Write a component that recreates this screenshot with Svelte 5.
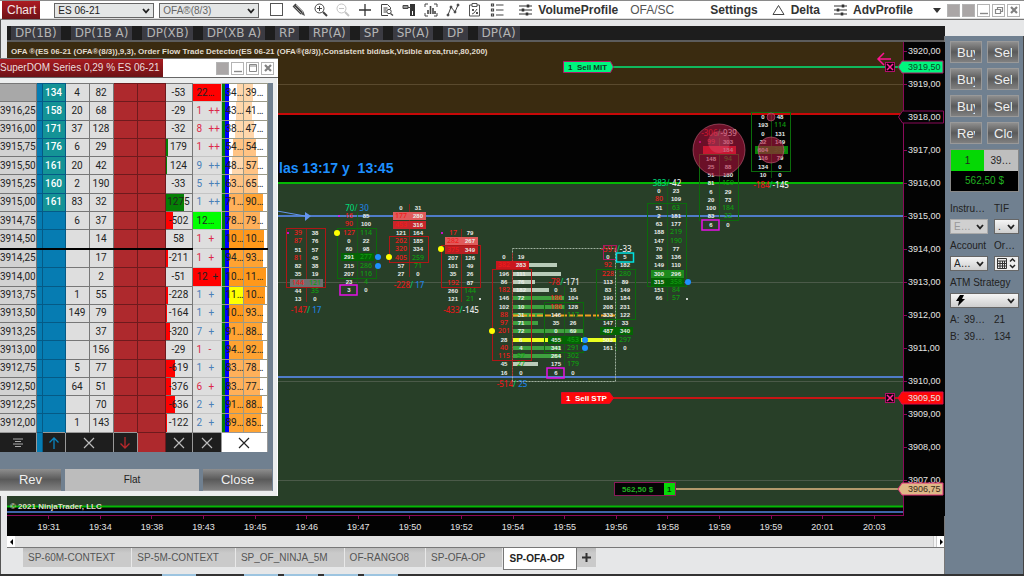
<script lang="ts">
  const profileTabs = ['DP(1B)', 'DP(1B A)', 'DP(XB)', 'DP(XB A)', 'RP', 'RP(A)', 'SP', 'SP(A)', 'DP', 'DP(A)'];
  const sheets = ['SP-60M-CONTEXT', 'SP-5M-CONTEXT', 'SP_OF_NINJA_5M', 'OF-RANGO8', 'SP-OFA-OP'];
  const times = ['19:31', '19:34', '19:38', '19:43', '19:45', '19:46', '19:47', '19:50', '19:52', '19:54', '19:55', '19:56', '19:58', '19:59', '19:59', '20:01', '20:03'];
  const prices = [3920, 3919, 3918, 3917, 3916, 3915, 3914, 3913, 3912, 3911, 3910, 3909, 3908, 3907];
  const orderButtons = ['Buy', 'Sell', 'Buy', 'Sell', 'Buy', 'Sell', 'Rev', 'Close'];

  // one price point is 33px high, a tick is a quarter of that
  const ROW = 8.25;
  const priceY = (p: number) => Math.round(9 + (3920 - p) * 33);

  type Column = {
    cx: number; top: number; rows: string; box: [number, number]; up: boolean;
    total?: [string, string]; totalY?: number;
    fills?: Record<number, string>; mark?: number;
  };

  // rows: "bid ask", r = red imbalance on the bid, g = green imbalance on the ask
  const columns: Column[] = [
    { cx: 299, top: 191, up: false, box: [0, 6], total: ['-147', ' 17'], totalY: 268, fills: { 6: '#6f6f6f' },
      rows: 'r39 38,r87 76,51 57,r81 45,82 38,35 19,r144 g121,44 g35,13 0' },
    { cx: 350, top: 174, up: true, box: [2, 7], total: ['70', ' 30'], totalY: 166, fills: { 5: '#046404' }, mark: 9,
      rows: 'r16 85,r90 100,r127 g114,0 22,60 98,291 g277,215 g286,207 g116,23 g4,3 0' },
    { cx: 402, top: 166, up: false, box: [4, 6], total: ['-228', ' 17'], totalY: 243, fills: { 1: '#e05a5a', 2: '#c9252b' },
      rows: '0 31,r177 280,r453 316,121 164,r262 185,r320 334,r405 g259,57 g71,27 0' },
    { cx: 454, top: 191, up: false, box: [2, 6], total: ['-433', '-145'], totalY: 268, fills: { 1: '#e05a5a', 2: '#b91f22' },
      rows: 'r17 79,r282 267,r375 349,207 126,101 49,35 26,r192 87,260 g144,121 g21' },
    { cx: 505, top: 215, up: false, box: [2, 12], total: ['-514', ' 25'], totalY: 342, fills: { 1: '#c9171d' },
      rows: '0 19,r382 283,196 111,86 76,r182 182,146 72,102 10,r88 31,r97 71,r201 72,28 6,r40 4,r115 g57,45 g27,16 0' },
    { cx: 557, top: 248, up: true, box: [2, 7], total: ['-78', '-171'], totalY: 240, fills: { 6: '#046404' }, mark: 10,
      rows: '0 16,r186 104,r186 128,146 g117,35 26,0 69,455 g453,341 g291,264 g302,175 g179,6 0' },
    { cx: 609, top: 215, up: true, box: [2, 7], total: ['-597', '-33'], totalY: 207, fills: { 9: '#046404' },
      rows: '0 5,r92 182,r228 g280,113 89,83 149,190 184,208 231,333 122,147 33,487 340,503 g297,161 0' },
    { cx: 660, top: 149, up: true, box: [2, 11], total: ['383', '-42'], totalY: 141, fills: { 10: '#1d8a1d', 11: '#046404' },
      rows: '0 23,r80 109,51 g63,2 181,63 177,188 g219,147 g190,70 77,38 136,149 110,300 296,315 g358,151 g84,66 g57' },
    { cx: 712, top: 100, up: true, box: [2, 9], total: ['-306', '-939'], totalY: 91, fills: { 1: '#ee1520' }, mark: 10,
      rows: 'r99 303,r214 184,148 g94,25 88,51 180,81 g159,6 29,20 73,100 g184,83 g32,6 0' },
    { cx: 764, top: 75, up: true, box: [0, 6], total: ['-184', '-145'], totalY: 143, fills: { 4: '#078407' },
      rows: '0 48,193 g114,0 131,32 149,604 g393,116 79,134 0,10 0' }
  ];

  const rowY = (c: Column, i: number) => Math.round(c.top + i * ROW);
  const cells = (c: Column) => c.rows.split(',').map((r) => r.split(' '));

  const PALE = '#b9ccb9';
  const GREEN = '#3fa03f';
  const volume: [number, number, string][] = [
    [1, 44, PALE], [2, 48, PALE], [3, 22, PALE], [4, 36, PALE], [5, 51, GREEN], [6, 52, GREEN], [7, 30, GREEN],
    [8, 25, GREEN], [9, 70, GREEN], [10, 103, '#eaff20'], [11, 48, GREEN], [12, 48, GREEN], [13, 25, PALE]
  ];

  const dots: [number, number, number, string][] = [
    [281, 191, 1, '#f0f'], [332, 174, 1, '#f0f'], [435, 191, 1, '#f0f'], [693, 100, 1, '#f0f'],
    [330, 191, 3, '#ff0'], [382, 215, 3, '#ff0'], [434, 207, 3, '#ff0'], [485, 289, 3, '#ff0'],
    [371, 215, 3, '#1e90ff'], [371, 224, 3, '#1e90ff'], [578, 298, 3, '#1e90ff'], [578, 306, 3, '#1e90ff'],
    [681, 240, 3, '#1e90ff'], [473, 257, 1, '#fff'], [680, 257, 1, '#fff']
  ];

  type Level = {
    price: string; bid: string; b1: string; b2: string; delta: string; bar: number;
    last: string; plus: string; tone: string; p1: string; w1: number; p2: string; w2: number;
  };
  const ladder: Level[] = [
    ['', '134', '4', '82', '-53', 0, '22…', '', 'hit', '34…', 6, '39…', 9],
    ['3916,25', '158', '20', '68', '-29', 0, '1', '++', 'sell', '43…', 7, '41…', 8],
    ['3916,00', '171', '37', '128', '-32', 0, '8', '++', 'sell', '38…', 8, '47…', 10],
    ['3915,75', '176', '6', '29', '179', 2, '1', '++', 'sell', '54…', 10, '54…', 12],
    ['3915,50', '161', '20', '42', '124', 1, '9', '++', 'buy', '48…', 11, '57…', 14],
    ['3915,25', '160', '2', '190', '-33', 0, '5', '++', 'buy', '63…', 13, '65…', 14],
    ['3915,00', '161', '83', '32', '1275', 18, '1', '++', 'buy', '71…', 14, '90…', 19],
    ['3914,75', '', '6', '37', '-502', 7, '12…', '', 'lift', '78…', 14, '79…', 16],
    ['3914,50', '', '', '14', '58', 0, '1', '+', 'sell', '10…', 14, '10…', 20],
    ['3914,25', '', '', '17', '-211', 2, '1', '+', 'sell', '94…', 14, '93…', 19],
    ['3914,00', '', '', '2', '-51', 0, '12', '+', 'hit', '10…', 14, '11…', 22],
    ['3913,75', '', '1', '55', '-228', 2, '1', '+', 'buy', '11…', 14, '10…', 21],
    ['3913,50', '', '149', '79', '-164', 1, '1', '+', 'buy', '10…', 14, '93…', 19],
    ['3913,25', '', '', '37', '-320', 4, '7', '+', 'buy', '91…', 14, '88…', 18],
    ['3913,00', '', '', '156', '-29', 0, '1', '-', 'sell', '94…', 14, '92…', 19],
    ['3912,75', '', '5', '77', '-619', 9, '1', '+', 'buy', '83…', 14, '78…', 16],
    ['3912,50', '', '64', '51', '-376', 5, '6', '+', 'sell', '83…', 14, '77…', 16],
    ['3912,25', '', '', '70', '-636', 9, '2', '+', 'buy', '91…', 14, '88…', 18],
    ['3912,00', '', '1', '143', '-122', 1, '2', '+', 'buy', '89…', 14, '85…', 17]
  ].map((r: any[]) => ({
    price: r[0], bid: r[1], b1: r[2], b2: r[3], delta: r[4], bar: r[5],
    last: r[6], plus: r[7], tone: r[8], p1: r[9], w1: r[10], p2: r[11], w2: r[12]
  }));

  // heavier volume gets a stronger orange
  function heat(v: string, w: number) {
    const n = v.startsWith('1') ? 100 : parseInt(v);
    if (v === '11…' && w === 14) return '#ffff00';
    if (n >= 100) return '#ff981a';
    if (n >= 85) return '#ffa332';
    if (n >= 70) return '#ffb05a';
    if (n >= 50) return '#ffc384';
    return '#ffd7ac';
  }
</script>

{#snippet chevron()}
  <svg class="chevron" width="8" height="6" viewBox="0 0 8 6" aria-hidden="true">
    <path d="M1 1l3 3.4L7 1" fill="none" stroke="currentColor" stroke-width="1.8" />
  </svg>
{/snippet}

{#snippet cross(color: string)}
  <svg width="12" height="12" viewBox="0 0 12 12" aria-hidden="true">
    <path d="M1 1l10 10M11 1L1 11" stroke={color} stroke-width="1.2" fill="none" />
  </svg>
{/snippet}

{#snippet winButtons(kind: string)}
  <div class="win-buttons {kind}">
    <button class="solid" aria-label="Link"></button>
    {#if kind === 'main'}<button class="solid" aria-label="Interval link"></button>{/if}
    <button aria-label="Minimize"><svg width="10" height="10"><path d="M1 8.5h8" stroke="#888" stroke-width="1.4" /></svg></button>
    <button aria-label="Maximize">
      <svg width="10" height="10" fill="none" stroke="#888">
        {#if kind === 'main'}
          <path d="M3.5 4V2.500h5v4H6.500M1.500 4.500h5v4h-5z" stroke-width="1.2" />
        {:else}
          <path d="M1.500 1.500h7v7h-7zM1.500 3h7" />
        {/if}
      </svg>
    </button>
    <button aria-label="Close window"><svg width="10" height="10"><path d="M2 2l6 6M8 2L2 8" stroke="#808080" stroke-width="2.200" /></svg></button>
  </div>
{/snippet}

{#snippet sliders()}
  <svg class="sliders" width="13" height="12" viewBox="0 0 13 12" stroke="#333" aria-hidden="true">
    <path d="M0 2h13M0 6h13M0 10h13" stroke-width="1.200" />
    <path d="M9 .5v3M4 4.500v3M8 8.500v3" stroke-width="2.600" />
  </svg>
{/snippet}

<div class="app">
  <header class="toolbar">
    <h1>Chart</h1>
    <div class="select instrument">
      <select aria-label="Instrument"><option>ES 06-21</option></select>
      {@render chevron()}
    </div>
    <div class="select interval">
      <select aria-label="Interval"><option>OFA®(8/3)</option></select>
      {@render chevron()}
    </div>
    <div class="tools">
      <button aria-label="Color"><svg width="14" height="14"><rect x=".5" y=".5" width="12" height="12" fill="#fff" stroke="#555" /></svg></button>
      <button aria-label="Draw">
        <svg width="14" height="14"><path d="M2 2l8 8" stroke="#444" stroke-width="4" /><path d="M2.500 3.500l7 7M4 2l7 7" stroke="#bbb" stroke-width=".8" /><path d="M9 11l2.500-2.500L13 13z" fill="#555" /></svg>
      </button>
      <button aria-label="Zoom in">
        <svg width="14" height="14" fill="none" stroke="#444"><circle cx="5.500" cy="5.500" r="4.500" /><path d="M5.500 3v5M3 5.500h5" /><path d="M9 9l4 4" stroke-width="2" /></svg>
      </button>
      <button aria-label="Zoom out" disabled>
        <svg width="14" height="14" fill="none" stroke="#c4c4c4"><circle cx="5.500" cy="5.500" r="4.500" /><path d="M3 5.500h5" /><path d="M9 9l4 4" stroke-width="2" /></svg>
      </button>
      <button aria-label="Cursor"><svg width="14" height="14"><path d="M7 1v12M1 7h12" stroke="#333" stroke-width="1.300" /></svg></button>
      <button aria-label="Data box">
        <svg width="14" height="14" fill="none" stroke="#444"><path d="M8 12.500H1.500v-11h6l3 3V6M3.500 5h4M3.500 7h3M3.500 9h3" /><circle cx="9" cy="8.500" r="2.200" /><path d="M10.500 10.500l2.500 2" stroke-width="1.500" /></svg>
      </button>
      <button aria-label="Chart trader">
        <svg width="14" height="14"><path d="M8 1h5v12H8z" fill="#333" /><path d="M1 2.500h5v3H1z" fill="#999" stroke="#444" /><path d="M6 4.500h3" stroke="#444" /><path d="M10 8h1v4h-1z" fill="#fff" /></svg>
      </button>
      <button aria-label="Bars">
        <svg width="14" height="14" fill="none" stroke="#444"><path d="M1 4V1h3M10 1h3v3M1 10v3h3M13 10v3h-3" /><path d="M4 11V7M6.500 11V3M9 11V5M11 11V8" stroke-width="1.600" /></svg>
      </button>
      <button aria-label="Indicators">
        <svg width="14" height="14" fill="none" stroke="#444"><path d="M2 12L5 4l4 5 3-7" /><g fill="#444"><circle cx="2" cy="12" r="1" /><circle cx="5" cy="4" r="1" /><circle cx="9" cy="9" r="1" /><circle cx="12" cy="2" r="1" /></g></svg>
      </button>
      <button aria-label="Strategies">
        <svg width="14" height="14" fill="none" stroke="#555"><path d="M4 2H1.500v11h10V2H9M4 .5h5v3H4zM4 6l2 2m0-2L4 8M4 11l2-1 3-4M8 9l2 2m0-2l-2 2" /></svg>
      </button>
      <button aria-label="Properties">
        <svg width="14" height="14" fill="none" stroke="#444"><path d="M1.500 1h2v2h-2zM1.500 6h2v2h-2zM1.500 11h2v2h-2zM6 2h7.500M6 7h7.500M6 12h7.500" stroke-width="1.200" /></svg>
      </button>
    </div>
    <nav class="menus">
      {@render sliders()}
      <a href="#volume">VolumeProfile</a>
      <a href="#ofa" class="thin">OFA/SC</a>
      <a href="#settings" class="settings">Settings</a>
      <svg width="13" height="12" aria-hidden="true"><path d="M6.500 1.500l5.500 9H1z" fill="none" stroke="#444" /></svg>
      <a href="#delta" class="delta">Delta</a>
      {@render sliders()}
      <a href="#adv">AdvProfile</a>
      <svg class="caret" width="8" height="5" aria-hidden="true"><path d="M0 0h8L4 5z" fill="#333" /></svg>
    </nav>
    {@render winButtons('main')}
  </header>

  <div class="workspace">
    <main>
      <nav class="profiles">
        {#each profileTabs as tab}<button>{tab}</button>{/each}
      </nav>

      <div class="chart">
        <svg class="plot" role="img" aria-label="ES 06-21 order flow chart">
          <rect width="100%" height="474" fill="#030303" />
          <rect width="100%" height="72" fill="#3a2b10" />
          <rect y="141" width="100%" height="323" fill="#283f28" />
          <g stroke="#4b5a49">
            <line x1="0" x2="100%" y1="42.500" y2="42.500" stroke="#5a4a2e" />
            <line x1="0" x2="100%" y1="240.500" y2="240.500" />
            <line x1="0" x2="100%" y1="339.500" y2="339.500" />
            <line x1="0" x2="100%" y1="438.500" y2="438.500" />
          </g>
          <line x1="0" x2="100%" y1="72" y2="72" stroke="#c80808" stroke-width="2" />
          <line x1="0" x2="100%" y1="141" y2="141" stroke="#04b804" stroke-width="2" />
          <line x1="0" x2="100%" y1="464.500" y2="464.500" stroke="#04b804" stroke-width="2" />
          <line x1="0" x2="100%" y1="470" y2="470" stroke="#3e64a8" stroke-width="2" />
          <line x1="0" x2="100%" y1="473.500" y2="473.500" stroke="#8a0a5a" />
          <g stroke="#4f7cc8" stroke-width="2">
            <line x1="0" x2="100%" y1="174" y2="174" />
            <line x1="0" x2="100%" y1="335" y2="335" />
            <path d="M270 169l28 5" stroke="#6495ed" stroke-width="1" />
          </g>
          <path d="M298 170l6 4-6 5z" fill="#6495ed" />

          <g fill="none" stroke="#9fb09f" stroke-dasharray="2 1">
            <rect x="505.500" y="206.500" width="103" height="133" />
          </g>
          {#each volume as [i, w, color]}
            <rect x="506" y={Math.round(215 + i * ROW) - 2} width={w} height="4" fill={color} />
          {/each}
          <path d="M506 273.500h103" stroke="#f0a020" stroke-width="2" stroke-dasharray="6 2" />

          {#each columns as c}
            {@const line = c.up ? '#0b6b0b' : '#b01616'}
            {@const list = cells(c)}
            <line x1={c.cx + 0.5} x2={c.cx + 0.5} y1={c.top - 4} y2={rowY(c, list.length - 1) + 3} stroke={line} opacity=".7" />
            {#each Object.entries(c.fills ?? {}) as [i, fill]}
              <rect x={c.cx - 16} y={rowY(c, +i) - 4} width="33" height="8" {fill} />
            {/each}
            <rect x={c.cx - 19.5} y={rowY(c, c.box[0]) - 4.5} width="39" height={rowY(c, c.box[1]) - rowY(c, c.box[0]) + 9} fill="none" stroke={line} />
            {#each list as [bid, ask], i}
              <text class="num" class:red={bid[0] === 'r'} x={c.cx - 8} y={rowY(c, i) + 2}>{bid.replace('r', '')}</text>
              <text class="num" class:green={ask[0] === 'g'} x={c.cx + 9} y={rowY(c, i) + 2}>{ask.replace('g', '')}</text>
            {/each}
            {#if c.total}
              <text class="total" x={c.cx} y={(c.totalY ?? 0) + 3}
                ><tspan fill={c.total[0][0] === '-' ? '#e01818' : '#00d878'}>{c.total[0]}</tspan><tspan fill="#00c060">/</tspan><tspan
                  fill={c.total[1][0] === '-' ? '#e8e8e8' : '#1e80e0'}>{c.total[1]}</tspan
                ></text>
            {/if}
            {#if c.mark}
              <rect x={c.cx - 17} y={rowY(c, c.mark) - 5} width="17" height="10" fill="none" stroke="#e810e8" stroke-width="1.500" />
            {/if}
          {/each}

          <rect x="596.500" y="203.500" width="13" height="14" fill="none" stroke="#a81a62" />
          <rect x="609.500" y="211" width="17" height="9" fill="none" stroke="#00e0e0" stroke-width="1.500" />
          {#each dots as [cx, cy, r, fill]}
            <circle {cx} {cy} {r} {fill} />
          {/each}
          <g fill="#b01840" fill-opacity=".6" stroke="#c0607a" stroke-opacity=".6">
            <circle cx="712" cy="108" r="26" />
            <circle cx="712" cy="100" r="11" fill="#e05a78" fill-opacity=".35" stroke="none" />
            <circle cx="764" cy="108" r="13" />
            <circle cx="764" cy="75" r="4" />
          </g>

          <text class="caption" x="4" y="12">OFA ®(ES 06-21 (OFA®(8/3)),9,3), Order Flow Trade Detector(ES 06-21 (OFA®(8/3)),Consistent bid/ask,Visible area,true,80,200)</text>
          <text class="note" x="272" y="131" xml:space="preserve">las 13:17 y  13:45</text>
          <text class="caption" x="3" y="467">© 2021 NinjaTrader, LLC</text>

          <line x1="606" x2="100%" y1="25" y2="25" stroke="#10b85c" stroke-width="2" />
          <path d="M556.500 19.500h47l3 5.500-3 5.500h-47z" fill="#00f57e" stroke="#b01866" />
          <text class="order" x="561" y="28" fill="#0b3a1e" xml:space="preserve">1  Sell MIT</text>
          <line x1="606" x2="100%" y1="356" y2="356" stroke="#c81414" stroke-width="2" />
          <path d="M554.500 350.500h48l4 5.500-4 5.500h-48z" fill="#ff0808" stroke="#e00a28" />
          <text class="order" x="559" y="359" fill="#fff" xml:space="preserve">1  Sell STP</text>
          <line x1="668" x2="100%" y1="447" y2="447" stroke="#b39a6c" stroke-width="2" />
          <rect x="607.500" y="440.500" width="61" height="13" fill="#050505" stroke="#8a1a5a" />
          <rect x="657" y="441" width="11" height="12" fill="#08d808" />
          <text class="order" x="615" y="450" fill="#22b322">562,50 $</text>
          <text class="order" x="660" y="450" fill="#063806">1</text>
        </svg>

        <svg class="scale" role="img" aria-label="Price scale">
          <rect width="100%" height="474" fill="#030303" />
          <path d="M.5 0v474" stroke="#8a0a5a" />
          {#each prices as p}
            <path d="M0 {priceY(p) + 0.5}h4" stroke="#8a0a5a" />
            <text x="5" y={priceY(p) + 3}>{p},00</text>
          {/each}
          <path d="M-4.500 75l4-6h41v12h-41z" fill="#030303" stroke="#8a0a5a" />
          <text x="5" y="78">3918,00</text>
          <path d="M-5 25l4-6h41v12h-41z" fill="#00f57e" stroke="#b01866" />
          <text x="5" y="28" style:fill="#0b4a26">3919,50</text>
          <path d="M-5 356l4-6h41v12h-41z" fill="#ff0808" stroke="#e00a48" />
          <text x="5" y="359">3909,50</text>
          <path d="M-5 447l4-6h41v12h-41z" fill="#deb887" stroke="#e0307a" />
          <text x="5" y="450" style:fill="#3a2a18">3906,75</text>
          {#each [25, 356] as y}
            <rect x="-17.500" y={y - 4.5} width="9" height="9" fill="#14000a" stroke="#b0106a" />
            <path d="M-16 {y - 3}l6 6m0-6l-6 6" stroke="#ff2a9a" stroke-width="1.500" />
          {/each}
          <path d="M-25 17h13M-19 11l-6 6 6 6" fill="none" stroke="#ff1493" stroke-width="1.500" />
        </svg>

        <section class="dom">
          <header>
            <h2>SuperDOM Series 0,29 % ES 06-21</h2>
            {@render winButtons('small')}
          </header>
          <div class="dom-body">
            <table>
              <colgroup>
                <col class="w36" /><col class="w6" /><col class="w23" /><col class="w24" /><col class="w24" /><col class="w24" />
                <col class="w28" /><col class="w27" /><col class="w29" /><col class="w22" /><col class="w24" />
              </colgroup>
              <tbody>
                {#each ladder as r}
                  <tr class:split={r.price === '3914,50'}>
                    <td class="price" class:blank={!r.price}>{r.price}</td>
                    <td class="blue"></td>
                    <td class="blue bid" class:teal={r.bid}>{r.bid}</td>
                    <td>{r.b1}</td>
                    <td>{r.b2}</td>
                    <td class="ask"></td>
                    <td class="ask"></td>
                    <td class="delta-cell" style:--w="{r.bar}px" style:--c={r.delta[0] === '-' ? '#f00' : '#058005'}>{r.delta}</td>
                    <td class="last {r.tone}"><span>{r.last}</span>{r.plus}</td>
                    <td class="vol first" style:--w="{r.w1}px" style:--c={heat(r.p1, r.w1)}>{r.p1}</td>
                    <td class="vol" style:--w="{r.w2}px" style:--c={heat(r.p2, r.w2)}>{r.p2}</td>
                  </tr>
                {/each}
              </tbody>
              <tfoot>
                <tr>
                  <td><button aria-label="Center"><svg width="10" height="10" stroke="#aaa"><path d="M0 1h10M2 3.500h6M0 6h10M2 8.500h6" /></svg></button></td>
                  <td class="blue"></td>
                  <td><button aria-label="Join bid"><svg width="12" height="12" fill="none" stroke="#0a85c0"><path d="M6 12V1M1.500 5.500L6 1l4.500 4.500" stroke-width="1.300" /></svg></button></td>
                  <td colspan="2"><button aria-label="Cancel buys">{@render cross('#bbb')}</button></td>
                  <td><button aria-label="Join ask"><svg width="12" height="12" fill="none" stroke="#b8282c"><path d="M6 0v11M1.500 6.500L6 11l4.500-4.500" stroke-width="1.300" /></svg></button></td>
                  <td class="ask"></td>
                  <td><button aria-label="Reset delta">{@render cross('#bbb')}</button></td>
                  <td><button aria-label="Reset last">{@render cross('#bbb')}</button></td>
                  <td colspan="2" class="white"><button aria-label="Reset volume">{@render cross('#222')}</button></td>
                </tr>
              </tfoot>
            </table>
            <div class="dom-foot">
              <button class="metal">Rev</button>
              <span>Flat</span>
              <button class="metal">Close</button>
            </div>
          </div>
        </section>
      </div>

      <div class="times">
        {#each times as t}<span>{t}</span>{/each}
      </div>
      <div class="scrollbar">
        <button aria-label="Scroll left"><svg width="5" height="6"><path d="M4 0v6L1 3z" /></svg></button>
        <i></i>
        <button aria-label="Scroll right"><svg width="5" height="6"><path d="M1 0v6l3-3z" /></svg></button>
      </div>
      <nav class="sheets">
        {#each sheets as s}<button>{s}</button>{/each}
        <button class="active">SP-OFA-OP</button>
        <button class="add" aria-label="Add tab"><svg width="9" height="9"><path d="M4.500 0v9M0 4.500h9" stroke="#333" stroke-width="2" /></svg></button>
      </nav>
    </main>

    <aside>
      <div class="orders">
        {#each orderButtons as b}<button class="metal"><span>{b}</span></button>{/each}
      </div>
      <div class="position">
        <b>1</b><span>39…</span>
        <strong>562,50 $</strong>
      </div>
      <div class="fields">
        <label for="instr">Instru…</label>
        <label for="tif">TIF</label>
        <div class="select">
          <select id="instr" disabled><option>E…</option></select>
          {@render chevron()}
        </div>
        <div class="select">
          <select id="tif"><option>.</option></select>
          {@render chevron()}
        </div>
        <label for="account">Account</label>
        <label for="qty">Or…</label>
        <div class="select">
          <select id="account"><option>A…</option></select>
          {@render chevron()}
        </div>
        <div class="select qty">
          <input id="qty" type="text" />
          <svg width="20" height="12" aria-hidden="true">
            <path d="M.5 1.500h9v10h-9zM.5 4h9M.5 6.500h9M.5 9h9M3 4v7M5.500 4v7M7.500 4v7" fill="none" stroke="#333" />
            <path d="M13 4.500L15.500 2 18 4.500M13 8l2.500 2.500L18 8" fill="none" stroke="#222" stroke-width="1.500" />
          </svg>
        </div>
        <label for="atm" class="wide">ATM Strategy</label>
        <div class="select wide">
          <select id="atm"><option></option></select>
          <svg class="bolt" width="9" height="11" aria-hidden="true"><path d="M4 0h4L6 4h3L2 11l1-5H0z" /></svg>
          {@render chevron()}
        </div>
      </div>
      <dl>
        <dt>A:</dt><dd>39…</dd><dd>21</dd>
        <dt>B:</dt><dd>39…</dd><dd>134</dd>
      </dl>
    </aside>
  </div>
  <footer class="taskbar"><i></i><i></i><i></i><i></i><i></i></footer>
</div>

<style>
  :global(body) { background: #e6e7e8; }

  .app {
    display: flex;
    flex-direction: column;
    min-height: 100vh;
    box-sizing: border-box;
    border-top: 1px solid #8a8a8a;
    font-family: "Liberation Sans", Arial, sans-serif;
    font-size: 10px;
    color: #222;
    overflow: hidden;
  }
  button, select, input { font: inherit; color: inherit; margin: 0; padding: 0; box-sizing: border-box; }
  button { border: 0; background: none; }
  svg { display: block; flex: none; }

  .toolbar {
    display: flex;
    align-items: center;
    height: 18px;
    padding-left: 2px;
    background: #fff;
    border-bottom: 1px solid #777;
    box-shadow: inset 0 -1px #ddd;
  }
  h1 {
    align-self: stretch;
    margin: 0 14px 0 0;
    padding: 0 4px 0 5px;
    background: linear-gradient(#ad1b22, #6e1217);
    color: #f3e6e6;
    font-size: 12px;
    font-weight: 400;
    line-height: 18px;
  }
  .select { position: relative; }
  .select select, .select input {
    display: block;
    width: 100%;
    height: 15px;
    padding: 0 3px;
    border: 1px solid #666;
    border-radius: 0;
    background: linear-gradient(#f5f5f5, #cfcfcf);
    appearance: none;
  }
  .select .chevron { position: absolute; right: 4px; top: 5px; pointer-events: none; }
  .instrument, .interval { width: 100px; margin-right: 5px; }
  .instrument select, .interval select { background: #e4e6e6; }
  .interval select { color: #666; }

  .tools { display: flex; gap: 8px; margin: 0 0 0 6px; }
  .menus { display: flex; flex: 1; align-items: center; margin-left: 15px; }
  .menus a { margin-left: 6px; color: #333; font-size: 12px; font-weight: 700; text-decoration: none; }
  .menus .thin { margin-left: 12px; font-weight: 400; color: #555; }
  .menus .settings { margin: 0 14px 0 auto; }
  .menus .delta { margin-right: 14px; }
  .menus .caret { margin: 0 6px 0 20px; }

  .win-buttons { display: flex; gap: 2px; margin-right: 4px; }
  .win-buttons button { display: grid; place-items: center; width: 13px; height: 13px; border: 1px solid #b4b4b4; }
  .win-buttons .solid { background: #aaa6a6; }

  .workspace { display: flex; flex: 1; border-left: 1px solid #555; }
  main { flex: 1; min-width: 0; padding: 6px 0 0 6px; background: #e6e7e8; }
  .profiles { display: flex; gap: 10px; height: 14px; padding-left: 4px; background: #1d1d1d; border-bottom: 2px solid #5c5c5c; }
  .profiles button { padding: 0 4px; background: #3b3b42; color: #b4b4b4; font: 12px/14px "DejaVu Sans", sans-serif; }

  .chart { position: relative; display: flex; }
  .plot { flex: 1; min-width: 0; height: 474px; }
  .scale { width: 42px; height: 474px; overflow: visible; }
  .plot text { font-weight: 700; }
  .scale text { fill: #e4e4e4; font-size: 9px; }
  .plot .num { fill: #e8ece8; font-size: 6px; text-anchor: middle; }
  .plot .red, .plot .green { fill: #f01c1c; font: 500 7px "Noto Sans", sans-serif; }
  .plot .green { fill: #109c10; }
  .plot .total { font: 500 8px "Noto Sans", sans-serif; text-anchor: middle; white-space: pre; }
  .plot .caption { fill: #e0dccf; font-size: 8px; }
  .plot .note { fill: #1e90ff; font-size: 14px; white-space: pre; }
  .plot .order { font-size: 8px; white-space: pre; }

  .dom {
    position: absolute;
    left: -7px;
    top: 17px;
    width: 278px;
    background: #eceeee;
    box-shadow: inset -1px 0 #fff, 0 -1px #777;
  }
  .dom header { display: flex; justify-content: space-between; align-items: center; height: 18px; background: #fff; border-bottom: 1px solid #666; }
  h2 {
    margin: 0;
    padding-right: 3px;
    background: linear-gradient(#a81b21, #6c1216);
    color: #eddcdc;
    font-size: 10px;
    font-weight: 400;
    line-height: 18px;
    white-space: nowrap;
  }
  .dom-body { margin: 5px 5px 5px 0; padding-right: 6px; background: #708090; }

  table { width: 267px; height: 369px; border-collapse: collapse; table-layout: fixed; font: 10px/12px Roboto, sans-serif; }
  .w36 { width: 36px; } .w6 { width: 6px; } .w22 { width: 22px; } .w23 { width: 23px; } .w24 { width: 24px; }
  .w27 { width: 27px; } .w28 { width: 28px; } .w29 { width: 29px; }
  td { padding: 0; border: 1px solid #777; border-width: 1px 1px 0 0; background: #dedede; text-align: center; white-space: nowrap; }
  .price { background: #d2d2d2; }
  .price.blank { background: #a8a8a8; }
  .blue { background: #067cb2; border-color: #055a86; }
  .teal { background: #149396; color: #fff; font-weight: 500; }
  .ask { background: #ae292d; border-color: #6e1a1d; }
  .delta-cell { background: linear-gradient(var(--c) 0 0) left / var(--w) 100% no-repeat #dedede; }
  .last { padding-left: 4px; border-color: #c4c4c4; text-align: left; }
  .last span { display: inline-block; min-width: 12px; }
  .sell { color: #dc2848; }
  .buy { color: #4a80b8; }
  .hit { background: #f00; }
  .hit span { min-width: 16px; }
  .lift { background: #0f0; }
  .vol { background: linear-gradient(var(--c) 0 0) left / var(--w) 100% no-repeat #fff; border-color: #998; text-align: left; padding-left: 2px; }
  .vol.first {
    padding-left: 4px;
    background:
      linear-gradient(to right, #088008 3px, #00f 3px) left / 7px 100% no-repeat,
      linear-gradient(var(--c) 0 0) right / var(--w) 100% no-repeat #fff;
  }
  .split td { border-bottom: 2px solid #000; }
  .split .last { border-bottom: 0; }
  tfoot td { height: 19px; background: #1e1e1e; border-color: #999; }
  tfoot .blue { background: #067cb2; }
  tfoot .ask { background: #ae292d; }
  tfoot .white { background: #fff; }
  tfoot button { display: grid; place-items: center; width: 100%; height: 18px; }

  .metal { background: linear-gradient(#8e8e8e, #5a5a5a 50%, #808080); border: 1px solid #999; color: #f0f0f0; font-size: 13px; }
  .dom-foot { display: grid; grid-template-columns: 61px 1fr 69px; gap: 4px; margin-right: -5px; padding-top: 17px; }
  .dom-foot span { background: #bcbcbc; text-align: center; line-height: 22px; }
  .dom-foot .metal { height: 22px; border-width: 0 0 1px; }

  .times { display: grid; grid-template-columns: repeat(17, 1fr); height: 20px; padding: 0 45px 0 16px; background: #030303; color: #e4e4e4; font-size: 9px; line-height: 23px; text-align: center; }
  .times span { background: linear-gradient(#8a0a5a 0 0) top / 1px 3px no-repeat; }
  .scrollbar { display: flex; align-items: center; height: 11px; border-bottom: 1px solid #777; background: #e2e2e2; }
  .scrollbar button { display: grid; place-items: center; width: 8px; height: 11px; background: #fff; }
  .scrollbar i { width: 4px; height: 11px; margin-left: auto; background: #f4f4f4; border: solid #ccc; border-width: 0 1px; box-sizing: border-box; }
  .sheets { display: flex; align-items: flex-start; padding-left: 16px; }
  .sheets button { height: 19px; padding: 0 16px 0 5px; border-right: 1px solid #e8e8e8; background: linear-gradient(#bbb, #cacaca 5px); color: #555; white-space: nowrap; }
  .sheets .active { height: 22px; padding: 0 11px 0 6px; background: #fff; border: 1px solid #777; border-top: 0; color: #222; font-weight: 700; }
  .sheets .add { padding: 0 5px; }

  aside { flex: none; width: 69px; margin-top: 16px; padding: 5px 4px 0 5px; background: #708090; border-right: 1px solid #444; box-shadow: -1px 0 #777; }
  .orders { display: grid; grid-template-columns: 32px 32px; gap: 5px; }
  .orders button { height: 22px; padding-left: 6px; text-align: left; }
  .orders span { display: block; width: 18px; overflow: hidden; }
  .position { display: grid; grid-template-columns: 33px 1fr; margin: 5px 0 11px; border: 1px solid #888; text-align: center; line-height: 21px; }
  .position b { background: #05d805; font-weight: 400; }
  .position span { background: #bebebe; }
  .position strong { grid-column: 1 / 3; background: #000; color: #20b020; font-weight: 400; line-height: 20px; }
  .fields { display: grid; grid-template-columns: 38px 25px; column-gap: 6px; }
  .fields label { line-height: 12px; margin-bottom: 4px; white-space: nowrap; }
  .fields .select { margin-bottom: 6px; }
  .fields select:disabled { color: #999; background: #d0d0d0; border-color: #aaa; opacity: 1; }
  .fields .wide { grid-column: 1 / 3; }
  .qty svg, .bolt { position: absolute; left: 3px; top: 1px; pointer-events: none; }
  .fields .bolt { left: 6px; top: 2px; }
  .qty input { background: #eee; }
  dl { display: grid; grid-template-columns: 14px 30px 1fr; row-gap: 5px; margin: 0; line-height: 12px; }
  dd { margin: 0; }

  .taskbar { display: flex; gap: 6px; height: 2px; padding-left: 162px; background: #333; }
  .taskbar i { width: 34px; background: #9cc4e0; }
  .taskbar i:first-child { margin-right: 42px; }
</style>
